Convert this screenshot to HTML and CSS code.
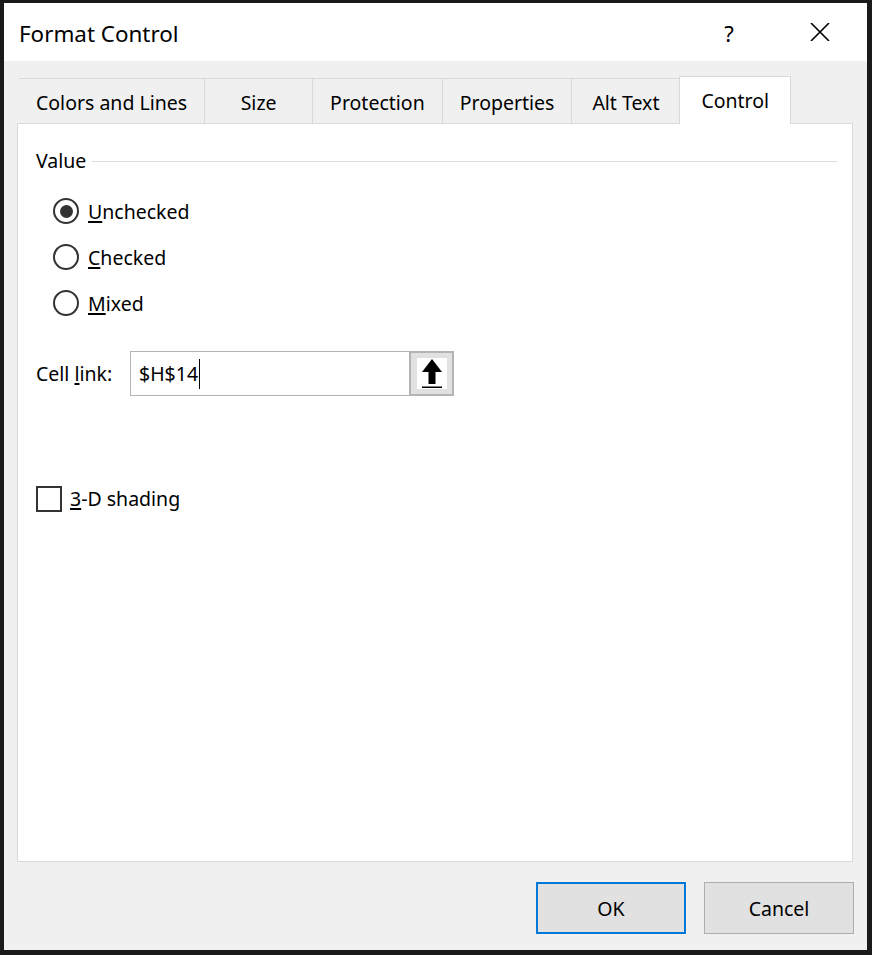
FILE: index.html
```html
<!DOCTYPE html>
<html lang="en">
<head>
    <meta charset="UTF-8">
    <meta name="viewport" content="width=device-width, initial-scale=1.0">
    <title>Format Control</title>
    <link rel="stylesheet" href="styles.css">
</head>
<body>
    <div class="window">
        <div class="titlebar">
            <span class="title">Format Control</span>
            <button class="title-btn help">?</button>
            <button class="title-btn close">
                <svg width="20" height="18" viewBox="0 0 20 18">
                    <path d="M1 0 L19 18 M19 0 L1 18" stroke="#000" stroke-width="1.6" fill="none"/>
                </svg>
            </button>
        </div>

        <div class="body">
            <div class="tabs">
                <div class="tab">Colors and Lines</div>
                <div class="tab">Size</div>
                <div class="tab">Protection</div>
                <div class="tab">Properties</div>
                <div class="tab">Alt Text</div>
                <div class="tab active">Control</div>
            </div>

            <div class="panel">
                <div class="group-head">
                    <span>Value</span>
                    <div class="rule"></div>
                </div>

                <div class="radios">
                    <label class="option"><span class="radio checked"></span><span><u>U</u>nchecked</span></label>
                    <label class="option"><span class="radio"></span><span><u>C</u>hecked</span></label>
                    <label class="option"><span class="radio"></span><span><u>M</u>ixed</span></label>
                </div>

                <div class="link-row">
                    <span class="link-label">Cell <u>l</u>ink:</span>
                    <div class="ref-box">
                        <div class="ref-input">$H$14<span class="caret"></span></div>
                        <button class="ref-btn">
                            <span class="ref-icon">
                                <svg width="30" height="31" viewBox="0 0 30 31">
                                    <path d="M15 1 L25 14 L18.5 14 L18.5 26 L11.5 26 L11.5 14 L5 14 Z" fill="#000"/>
                                    <rect x="5" y="28.5" width="20" height="1.5" fill="#000"/>
                                </svg>
                            </span>
                        </button>
                    </div>
                </div>

                <label class="check-row"><span class="checkbox"></span><span><u>3</u>-D shading</span></label>
            </div>

            <div class="footer">
                <button class="btn primary">OK</button>
                <button class="btn">Cancel</button>
            </div>
        </div>
    </div>
</body>
</html>
```

FILE: styles.css
```css
body {
    margin: 0;
    font-family: "Noto Sans", "Open Sans", sans-serif;
    color: #000;
}
button {
    font-family: inherit;
    color: #000;
    cursor: pointer;
}
u {
    text-decoration-thickness: 2px;
    text-underline-offset: 2px;
}
.window {
    width: 872px;
    height: 955px;
    box-sizing: border-box;
    border-style: solid;
    border-color: #1a1a1a;
    border-width: 3px 5px 5px 4px;
    display: flex;
    flex-direction: column;
}
.titlebar {
    height: 58px;
    flex-shrink: 0;
    background: #fff;
    display: flex;
    align-items: center;
    padding-left: 15px;
}
.title {
    font-size: 22.4px;
    padding-top: 2px;
}
.title-btn {
    width: 46px;
    height: 58px;
    border: none;
    background: none;
    padding: 0;
    display: flex;
    align-items: center;
    justify-content: center;
}
.help {
    margin-left: auto;
    font-size: 22px;
    padding-top: 2px;
}
.close {
    margin-left: 45px;
    margin-right: 24px;
}
.body {
    flex: 1;
    background: #f0f0f0;
    padding: 15px 14px 16px 13px;
    display: flex;
    flex-direction: column;
}
.tabs {
    display: flex;
    align-items: flex-end;
    margin-left: 2px;
}
.tab {
    height: 45px;
    min-width: 108px;
    box-sizing: border-box;
    border-top: 1px solid #d9d9d9;
    border-right: 1px solid #d9d9d9;
    padding: 3px 17px 0;
    display: flex;
    align-items: center;
    justify-content: center;
    font-size: 19.5px;
}
.tab.active {
    height: 48px;
    background: #fff;
    border: 1px solid #d9d9d9;
    border-bottom: none;
    margin-left: -1px;
    margin-bottom: -1px;
    padding: 0 21px;
    position: relative;
    z-index: 1;
}
.panel {
    flex: 1;
    background: #fff;
    border: 1px solid #d9d9d9;
    padding: 26px 15px 0 18px;
    font-size: 19.5px;
}
.group-head {
    display: flex;
    align-items: center;
    height: 22px;
    line-height: 22px;
}
.rule {
    flex: 1;
    height: 1px;
    background: #dcdcdc;
    margin-left: 6px;
}
.radios {
    margin-top: 16px;
    padding-left: 17px;
}
.option {
    display: flex;
    align-items: center;
    gap: 9px;
    height: 46px;
}
.radio {
    width: 26px;
    height: 26px;
    box-sizing: border-box;
    border: 2px solid #333;
    border-radius: 50%;
    display: flex;
    align-items: center;
    justify-content: center;
}
.radio.checked::after {
    content: "";
    width: 13px;
    height: 13px;
    border-radius: 50%;
    background: #333;
}
.link-row {
    margin-top: 25px;
    display: flex;
    align-items: center;
}
.link-label {
    width: 94px;
}
.ref-box {
    display: flex;
    height: 45px;
}
.ref-input {
    width: 279px;
    box-sizing: border-box;
    border: 1px solid #b4b4b4;
    border-right: none;
    padding-left: 8px;
    display: flex;
    align-items: center;
}
.caret {
    width: 1px;
    height: 30px;
    background: #000;
    margin-left: 1px;
}
.ref-btn {
    width: 45px;
    height: 45px;
    box-sizing: border-box;
    border: 2px solid #b4b4b4;
    background: #e1e1e1;
    padding: 0;
    display: flex;
    align-items: center;
    justify-content: center;
}
.ref-icon {
    width: 30px;
    height: 31px;
    background: #fff;
    display: flex;
}
.check-row {
    margin-top: 89px;
    display: flex;
    align-items: center;
    gap: 8px;
}
.checkbox {
    width: 26px;
    height: 26px;
    box-sizing: border-box;
    border: 2px solid #333;
}
.footer {
    display: flex;
    justify-content: flex-end;
    gap: 18px;
    margin-top: 20px;
    margin-right: -1px;
}
.btn {
    width: 150px;
    height: 52px;
    box-sizing: border-box;
    background: #e1e1e1;
    border: 1px solid #adadad;
    font-size: 19.5px;
}
.btn.primary {
    border: 2px solid #0078d7;
}
```
